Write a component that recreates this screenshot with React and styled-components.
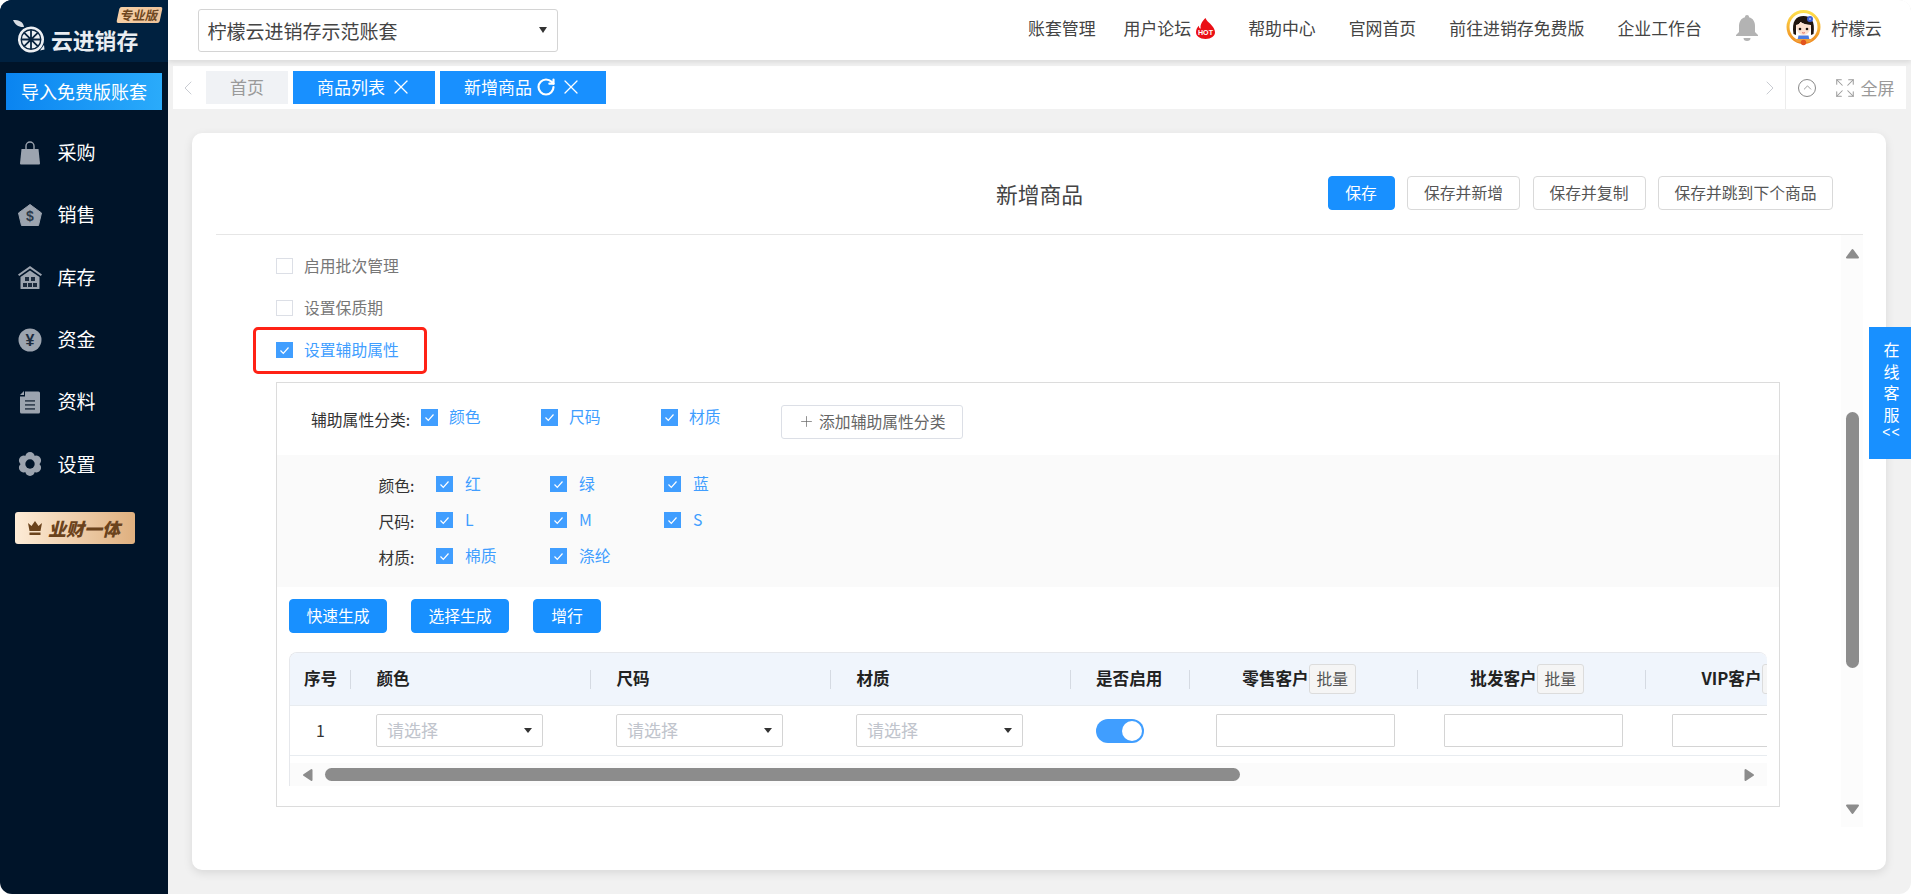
import React from "react";
import styled, { createGlobalStyle } from "styled-components";
import { X, RotateCw, ChevronLeft, ChevronRight, ChevronUp, Expand, Plus } from "lucide-react";

const Global = createGlobalStyle`
  html, body { margin: 0; padding: 0; background: #fff; }
  body { font-family: "Noto Sans CJK SC", "Liberation Sans", sans-serif; color: #333; }
  * { box-sizing: border-box; }
`;

const Page = styled.div`
  position: relative; width: 1911px; height: 894px; display: flex; overflow: hidden;
  border-radius: 12px; background: #f1f1f1;
`;
const Sidebar = styled.aside`
  width: 168px; flex: none; background: #001429; display: flex; flex-direction: column;
`;
const LogoBar = styled.div`
  position: relative; height: 62px; background: #002140; display: flex; align-items: flex-end;
  padding: 0 0 10px 13px; gap: 6px;
`;
const LogoText = styled.span`
  color: #e9edf2; font-size: 21.8px; font-weight: 700; line-height: 24px; white-space: nowrap;
`;
const Badge = styled.span`
  position: absolute; left: 118px; top: 7px; width: 43px; height: 16px; border-radius: 2px;
  background: linear-gradient(90deg, #f5cfa6, #eec39a); transform: skewX(-12deg);
  color: #6e4722; font-size: 12.5px; font-weight: 700; line-height: 16px; text-align: center; white-space: nowrap;
`;
const ImportButton = styled.div`
  margin: 11px 6px 0; height: 37px; background: linear-gradient(90deg, #0a84f0, #2aabfb); padding-bottom: 2px;
  color: #fff; font-size: 18px; display: flex; align-items: center; justify-content: center; white-space: nowrap;
`;
const Menu = styled.nav`
  margin-top: 11.5px; display: flex; flex-direction: column;
`;
const MenuItem = styled.div`
  height: 62.3px; display: flex; align-items: center; padding: 0 0 2px 18px; gap: 15.5px; color: #fff; font-size: 19px;
`;
const MenuIcon = styled.svg`
  width: 24px; height: 24px; flex: none; fill: #9ca4af; margin-top: 2px;
`;
const GoldButton = styled.div`
  margin: 16.5px 0 0 15px; width: 120px; height: 32px; border-radius: 3px;
  background: linear-gradient(90deg, #fdecd7, #dfb07f); display: flex; align-items: center;
  padding-left: 12px; gap: 5px; color: #6b431c; font-size: 18px; font-weight: 900; font-style: italic; white-space: nowrap;
`;
const Main = styled.div`
  flex: 1; min-width: 0; display: flex; flex-direction: column;
`;
const Header = styled.header`
  height: 60px; flex: none; background: #fff; box-shadow: 0 2px 5px rgba(0, 0, 0, 0.1);
  display: flex; align-items: center; justify-content: space-between; padding: 0 29px 2px 29.5px;
  position: relative; z-index: 1;
`;
const AccountSelect = styled.div`
  width: 360px; height: 43px; border: 1px solid #d4d4d4; border-radius: 3px; display: flex; align-items: center;
  justify-content: space-between; padding: 0 10px 0 9px; font-size: 19px; color: #444; margin-top: 2px;
`;
const Caret = styled.i`
  display: block; width: 0; height: 0; border-left: ${(p) => p.$w || 4.5}px solid transparent;
  border-right: ${(p) => p.$w || 4.5}px solid transparent; border-top: ${(p) => p.$h || 6}px solid #333;
`;
const Nav = styled.div`
  display: flex; align-items: center; gap: 33px; font-size: 16.9px; color: #444; white-space: nowrap; margin-top: -3px;
`;
const NavLink = styled.span`
  display: flex; align-items: center; gap: 3px; margin-left: ${(p) => (p.$pull ? "-5px" : "0")};
`;
const User = styled.span`
  display: flex; align-items: center; gap: 10.5px; margin-left: -6px;
`;
const TabBar = styled.div`
  margin: 6px 5px 0; height: 43px; display: flex; flex: none;
`;
const TabStrip = styled.div`
  flex: 1; background: #fff; display: flex; align-items: center; padding-left: 33px; position: relative; gap: 5px;
`;
const ArrowSlot = styled.span`
  position: absolute; top: 10px; left: ${(p) => p.$left ?? "auto"}; right: ${(p) => p.$right ?? "auto"};
  color: #c9ccd2; display: flex;
`;
const Tab = styled.div`
  height: 33px; display: flex; align-items: center; font-size: 17px; white-space: nowrap; padding-bottom: 2px;
  padding-left: ${(p) => (p.$active ? "24px" : "0")}; padding-right: ${(p) => (p.$active ? "22.5px" : "0")};
  background: ${(p) => (p.$active ? "#1890ff" : "#f0f2f5")}; color: ${(p) => (p.$active ? "#fff" : "#9a9a9a")};
  width: ${(p) => (p.$home ? "82px" : "auto")}; justify-content: ${(p) => (p.$home ? "center" : "flex-start")};
  gap: ${(p) => (p.$active ? "3.5px" : "0")};
`;
const FullBar = styled.div`
  width: 120px; margin-left: 1px; background: #fff; display: flex; align-items: center; padding-left: 12px;
  color: #9a9a9a; font-size: 17px; white-space: nowrap; box-shadow: -1px 0 0 #ececec;
`;
const CircleIcon = styled.span`
  width: 18px; height: 18px; border-radius: 50%; border: 1px solid #888; display: flex; align-items: center;
  justify-content: center; margin-right: 18px; color: #888;
`;
const Card = styled.section`
  margin: 24px 25px 24px 24px; flex: 1; min-height: 0; background: #fff; border-radius: 10px;
  box-shadow: 0 3px 10px rgba(0, 0, 0, 0.1); padding: 0 23px 0 24px; display: flex; flex-direction: column;
`;
const CardHead = styled.div`
  height: 102px; flex: none; border-bottom: 1px solid #e6e6e6; display: grid; grid-template-columns: 1fr auto 1fr;
  align-items: center; padding-top: 20px;
`;
const Title = styled.h1`
  margin: 0; font-size: 21.8px; font-weight: 400; color: #444; grid-column: 2;
`;
const HeadActions = styled.div`
  display: flex; justify-content: flex-end; gap: 12.5px; padding-right: 30px; margin-top: -1px;
`;
const Btn = styled.div`
  height: 34px; display: flex; align-items: center; justify-content: center; white-space: nowrap; font-size: 15.8px;
  border-radius: 4px; width: ${(p) => p.$w}px; padding-bottom: 2px;
  background: ${(p) => (p.$primary ? "#1890ff" : "#fff")}; color: ${(p) => (p.$primary ? "#fff" : "#555")};
  border: 1px solid ${(p) => (p.$primary ? "#1890ff" : "#d9d9d9")};
`;
const ScrollArea = styled.div`
  height: 592px; display: flex; flex: none;
`;
const Content = styled.div`
  flex: 1; min-width: 0; padding: 10px 61px 0 60px;
`;
const VTrack = styled.div`
  width: 22px; flex: none; background: #fcfcfc; display: flex; flex-direction: column; align-items: center;
`;
const VThumb = styled.div`
  width: 13px; height: 256px; margin-top: 153px; background: #8c8c8c; border-radius: 7px; flex: none;
`;
const ScrollArrow = styled.svg`
  display: block; flex: none; fill: #8c8c8c; stroke: #8c8c8c; stroke-width: 2; stroke-linejoin: round;
  margin: ${(p) => p.$margin};
`;
const OptionRow = styled.div`
  position: relative; height: 42px; display: flex; align-items: center; gap: 11.5px; font-size: 15.8px; padding-bottom: 2px;
  color: ${(p) => (p.$on ? "#409eff" : "#777")};
`;
const Highlight = styled.div`
  position: absolute; left: -23px; top: -2px; width: 174px; height: 47px; border: 3.5px solid #ff2216; border-radius: 5px;
`;
const Box = styled.span`
  width: 16.5px; height: 16.5px; flex: none; display: flex; align-items: center; justify-content: center; margin-top: 2px;
  background: ${(p) => (p.$on ? "#409eff" : "#fff")}; border: 1px solid ${(p) => (p.$on ? "#409eff" : "#dcdfe6")};
`;
const Panel = styled.div`
  margin-top: 11px; height: 425px; border: 1px solid #dcdcdc;
`;
const CategoryRow = styled.div`
  height: 72px; display: flex; align-items: center; padding: 0 0 0 34px; font-size: 15.8px; color: #333;
`;
const CategoryLabel = styled.span`
  width: 110px; white-space: nowrap; padding-top: 1px;
`;
const CategoryOption = styled.span`
  width: 120px; display: flex; align-items: center; gap: 11.5px; color: #409eff; font-size: 15.8px; margin-top: -3px; padding-bottom: 2px;
`;
const AddButton = styled.div`
  width: 181.5px; height: 34px; border: 1px solid #dcdfe6; border-radius: 3px; display: flex; align-items: center;
  justify-content: center; gap: 4px; color: #666; font-size: 15.8px; white-space: nowrap; margin-top: 5px; padding-bottom: 1px;
`;
const ValuesBlock = styled.div`
  background: #fafafa; height: 132px; padding: 11px 0 13px; display: flex; flex-direction: column;
`;
const ValueRow = styled.div`
  height: 36px; display: flex; align-items: center; font-size: 15.8px; color: #333;
`;
const ValueLabel = styled.span`
  width: 137.5px; padding-top: 3px; text-align: right; margin-right: 21.5px; flex: none;
`;
const ValueOption = styled.span`
  width: 114px; display: flex; align-items: center; gap: 12.5px; color: #409eff; padding-bottom: 2px;
`;
const ActionRow = styled.div`
  padding: 12px 0 0 12px; display: flex; gap: 24px;
`;
const TableWrap = styled.div`
  margin: 19px 12px 0; height: 134px; overflow: hidden; border-top: 1px solid #e6e8ec; border-left: 1px solid #e6e8ec;
  border-radius: 8px 8px 0 0; display: flex; flex-direction: column;
`;
const colTemplate = "61px 240px 240px 240px 119px 228px 228px 228px";
const HeadRow = styled.div`
  height: 53px; flex: none; display: grid; grid-template-columns: ${colTemplate}; background: #f0f5fc;
  border-bottom: 1px solid #e8ecf0; align-items: center; font-size: 16.6px; font-weight: 700; color: #222; white-space: nowrap;
`;
const HeadCell = styled.div`
  position: relative; height: 100%; display: flex; align-items: center;
  justify-content: ${(p) => (p.$center ? "center" : "flex-start")};
  padding-left: ${(p) => p.$pad ?? 0}px; padding-right: ${(p) => p.$padR ?? 0}px; padding-bottom: 2px;
  &::after {
    content: ""; position: absolute; right: 0; top: 17px; height: 19px; width: 1px;
    background: ${(p) => (p.$last ? "transparent" : "#d5dae2")};
  }
`;
const BatchButton = styled.span`
  width: 47px; height: 30px; flex: none; border: 1px solid #dcdcdc; border-radius: 3px; background: #f5f5f5; color: #555;
  font-weight: 400; font-size: 15.8px; display: flex; align-items: center; justify-content: center; margin-top: 2px; padding-bottom: 2px;
`;
const BodyRow = styled.div`
  height: 50px; flex: none; display: grid; grid-template-columns: ${colTemplate}; border-bottom: 1px solid #e8ecf0;
  align-items: center; white-space: nowrap; font-size: 15.8px;
`;
const BodyCell = styled.div`
  display: flex; align-items: center; justify-content: ${(p) => (p.$center ? "center" : "flex-start")};
  padding-left: ${(p) => p.$pad ?? 0}px;
`;
const SelectField = styled.div`
  width: 167px; height: 33px; border: 1px solid #d4d4d4; border-radius: 2px; display: flex; align-items: center;
  justify-content: space-between; padding: 0 10px 3px; font-size: 17px; color: #c0c4cc;
`;
const Toggle = styled.span`
  width: 48px; height: 24px; border-radius: 12px; background: #409eff; display: flex; align-items: center;
  justify-content: flex-end; padding-right: 2px;
  &::after { content: ""; width: 20px; height: 20px; border-radius: 50%; background: #fff; }
`;
const InputField = styled.div`
  width: 179px; height: 33px; border: 1px solid #d4d4d4; border-radius: 1px; background: #fff; flex: none;
`;
const HTrackGap = styled.div`
  height: 7px; flex: none;
`;
const HTrack = styled.div`
  height: 23px; flex: none; background: #fbfbfb; display: flex; align-items: center; padding-left: 12px;
`;
const HThumb = styled.div`
  width: 915px; height: 13px; background: #8c8c8c; border-radius: 7px; flex: none;
`;
const Service = styled.aside`
  position: absolute; right: 0; top: 327px; width: 42px; height: 132px; background: #1890ff; color: #fff;
  display: flex; flex-direction: column; align-items: center; padding: 12px 0 0 3px; font-size: 16px; line-height: 21.5px;
`;
const ServiceArrow = styled.span`
  font-size: 14px; line-height: 15px; letter-spacing: 1px; font-family: "Liberation Sans", sans-serif;
`;

const Check = ({ on }) => (
  <Box $on={on}>
    {on && (
      <svg width="11" height="9" viewBox="0 0 11 9" fill="none" stroke="#fff" strokeWidth="1.2">
        <path d="M1.5 4.5 4.3 7.3 9.5 1.5" />
      </svg>
    )}
  </Box>
);

const LogoMark = () => (
  <svg width="32" height="33" viewBox="0 0 32 33" style={{ flex: "none", marginBottom: "-1px" }}>
    <path d="M0 0c6 0 10 1.500 11 7C6 7.500 2 5 0 0z" fill="#d8dde3" />
    <path d="M18 6.500a13 13 0 1 1 0 26c-3 0-5-.500-7-2a13 13 0 0 1 7-24z" fill="#eceff3" />
    <path d="M31 25l.500 4.500-4.500 1z" fill="#eceff3" />
    <circle cx="18" cy="19.500" r="9.800" fill="none" stroke="#0a2540" strokeWidth="1.400" />
    <g stroke="#0a2540" strokeWidth="1.800">
      <path d="M18 10v19M8.500 19.500h19M11.300 12.800l13.400 13.400M24.700 12.800 11.300 26.200" />
    </g>
    <circle cx="18" cy="19.500" r="2.200" fill="#0a2540" />
  </svg>
);

const IconBag = () => (
  <MenuIcon viewBox="0 0 24 24">
    <path d="M3.500 8h17L22 22.500a1 1 0 0 1-1 1H3a1 1 0 0 1-1-1z" />
    <path d="M8 10V5a4 4 0 0 1 8 0v5" fill="none" stroke="#9ca4af" strokeWidth="1.400" />
  </MenuIcon>
);
const IconTag = () => (
  <MenuIcon viewBox="0 0 24 24">
    <path d="M12 1.500 23.500 10 20.500 22.500H3.500L.5 10z" stroke="#9ca4af" strokeLinejoin="round" />
    <text x="12" y="18" textAnchor="middle" fontSize="14" fontWeight="700" fill="#2c3a4b" fontFamily="Liberation Sans">$</text>
  </MenuIcon>
);
const IconHome = () => (
  <MenuIcon viewBox="0 0 24 24">
    <path d="M12 1 24 9.500 22.800 11 12 3.400 1.200 11 0 9.500z" />
    <path d="M12 5.500 21.500 12v11.500a.5.500 0 0 1-.5.5H3a.5.500 0 0 1-.5-.5V12z" />
    <path d="M7 12h4v4H7zM13 12h4v4h-4zM5 18h4v4H5zM10 18h4v4h-4zM15 18h4v4h-4z" fill="#1d2c3e" />
  </MenuIcon>
);
const IconYen = () => (
  <MenuIcon viewBox="0 0 24 24">
    <circle cx="12" cy="12" r="11.500" />
    <text x="12" y="18" textAnchor="middle" fontSize="16" fontWeight="700" fill="#1d2c3e" fontFamily="Liberation Sans">¥</text>
  </MenuIcon>
);
const IconDoc = () => (
  <MenuIcon viewBox="0 0 24 24">
    <path d="M7 1.500h13.500a1.500 1.500 0 0 1 1.500 1.500v19a1.500 1.500 0 0 1-1.500 1.500h-17A1.500 1.500 0 0 1 2 22V6.500h5z" />
    <path d="M2 5 6 1v4z" />
    <path d="M7 10h10v1.800H7zM7 14h10v1.800H7zM7 18h10v1.800H7z" fill="#3a4656" />
  </MenuIcon>
);
const IconGear = () => (
  <MenuIcon viewBox="0 0 24 24">
    {[0, 60, 120, 180, 240, 300].map((a) => (
      <circle key={a} cx="12" cy="4.800" r="4.800" transform={`rotate(${a} 12 12)`} />
    ))}
    <circle cx="12" cy="12" r="8" />
    <circle cx="12" cy="12" r="4.700" fill="#001429" />
  </MenuIcon>
);
const Crown = () => (
  <svg width="16" height="16" viewBox="0 0 16 16" fill="#6b431c" style={{ flex: "none" }}>
    <path d="M1 3l3.500 3L8 1l3.500 5L15 3l-1.500 8h-11z" />
    <path d="M2.500 12.500h11V15h-11z" />
  </svg>
);
const Fire = () => (
  <svg width="19" height="21" viewBox="0 0 20 22" style={{ marginTop: 1, marginLeft: 2 }}>
    <path d="M10 0c1 3 3 4 5 6 3 3 5 6 5 9 0 4-4 7-10 7S0 19 0 15c0-3 1-5 3-7 0 2 1 3 2 3C4 7 7 3 10 0z" fill="#ea0f16" />
    <text x="10" y="17.500" textAnchor="middle" fontSize="7.500" fontWeight="700" fill="#fff" fontFamily="Liberation Sans">HOT</text>
  </svg>
);
const Bell = () => (
  <svg width="24" height="26" viewBox="0 0 24 26" fill="#b3b3b3" style={{ flex: "none" }}>
    <path d="M12 0a2 2 0 0 1 2 2.200c4 1 6 4.500 6 8.800v6l3 3v1H1v-1l3-3v-6c0-4.300 2-7.800 6-8.800A2 2 0 0 1 12 0z" />
    <path d="M8.500 23h7a3.500 3 0 0 1-7 0z" />
  </svg>
);
const Avatar = () => (
  <svg width="35" height="36" viewBox="0 0 35 36" style={{ flex: "none" }}>
    <defs>
      <linearGradient id="ring" x1="0" y1="0" x2="0" y2="1">
        <stop offset="0" stopColor="#ffdf4d" />
        <stop offset="1" stopColor="#ef8a1f" />
      </linearGradient>
    </defs>
    <circle cx="17.500" cy="17" r="15.500" fill="#fff" stroke="url(#ring)" strokeWidth="3" />
    <path d="M7.500 24C5.500 11 10 6 17.500 6S29.500 11 27.500 24l-2.500 1V15c-4 0-8-1-10.500-3-1 2-2.500 3-4.500 3v10z" fill="#20150f" />
    <path d="M10 15c2 0 3.500-1 4.500-3 2.500 2 6.500 3 10.500 3 0 5-3 10-7.500 10S10 20 10 15z" fill="#fbe0cf" />
    <circle cx="14" cy="19" r="1.300" fill="#20150f" />
    <circle cx="21" cy="19" r="1.300" fill="#20150f" />
    <path d="M16 22.500c1 .7 2 .7 3 0" stroke="#d6453a" fill="none" strokeWidth=".8" />
    <circle cx="24" cy="9" r="3" fill="#3f62d6" />
    <circle cx="24" cy="9" r="1" fill="#a9bbf5" />
    <path d="M12.500 25.500h10l1 4.500h-12z" fill="#4a7be0" />
    <path d="M8 29h19l-3 3h-13z" fill="#f2a03a" />
    <circle cx="17.500" cy="32.500" r="2.700" fill="#e2541f" />
  </svg>
);

const menu = [
  ["采购", IconBag], ["销售", IconTag], ["库存", IconHome], ["资金", IconYen], ["资料", IconDoc], ["设置", IconGear],
];

const SelectBox = () => (
  <SelectField>
    请选择
    <Caret $w={4} $h={5.5} style={{ marginTop: 3 }} />
  </SelectField>
);

export default function App() {
  return (
    <>
      <Global />
      <Page>
        <Sidebar>
          <LogoBar>
            <LogoMark />
            <LogoText>云进销存</LogoText>
            <Badge>专业版</Badge>
          </LogoBar>
          <ImportButton>导入免费版账套</ImportButton>
          <Menu>
            {menu.map(([label, Icon]) => (
              <MenuItem key={label}>
                <Icon />
                {label}
              </MenuItem>
            ))}
          </Menu>
          <GoldButton>
            <Crown />
            业财一体
          </GoldButton>
        </Sidebar>
        <Main>
          <Header>
            <AccountSelect>
              柠檬云进销存示范账套
              <Caret />
            </AccountSelect>
            <Nav>
              <NavLink>账套管理</NavLink>
              <NavLink $pull>用户论坛<Fire /></NavLink>
              <NavLink>帮助中心</NavLink>
              <NavLink>官网首页</NavLink>
              <NavLink>前往进销存免费版</NavLink>
              <NavLink>企业工作台</NavLink>
              <Bell />
              <User><Avatar />柠檬云</User>
            </Nav>
          </Header>
          <TabBar>
            <TabStrip>
              <ArrowSlot $left="3px"><ChevronLeft size={24} strokeWidth={1} /></ArrowSlot>
              <Tab $home>首页</Tab>
              <Tab $active>商品列表<X size={24} strokeWidth={1.3} /></Tab>
              <Tab $active>新增商品<RotateCw size={20} strokeWidth={2.6} /><X size={24} strokeWidth={1.3} /></Tab>
              <ArrowSlot $right="3px"><ChevronRight size={24} strokeWidth={1} /></ArrowSlot>
            </TabStrip>
            <FullBar>
              <CircleIcon><ChevronUp size={13} strokeWidth={1.5} /></CircleIcon>
              <Expand size={22} strokeWidth={1.1} style={{ marginRight: 4.5 }} />
              全屏
            </FullBar>
          </TabBar>
          <Card>
            <CardHead>
              <Title>新增商品</Title>
              <HeadActions>
                <Btn $primary $w={67}>保存</Btn>
                <Btn $w={113}>保存并新增</Btn>
                <Btn $w={113}>保存并复制</Btn>
                <Btn $w={175}>保存并跳到下个商品</Btn>
              </HeadActions>
            </CardHead>
            <ScrollArea>
              <Content>
                <OptionRow><Check />启用批次管理</OptionRow>
                <OptionRow><Check />设置保质期</OptionRow>
                <OptionRow $on>
                  <Check on />设置辅助属性
                  <Highlight />
                </OptionRow>
                <Panel>
                  <CategoryRow>
                    <CategoryLabel>辅助属性分类:</CategoryLabel>
                    <CategoryOption><Check on />颜色</CategoryOption>
                    <CategoryOption><Check on />尺码</CategoryOption>
                    <CategoryOption><Check on />材质</CategoryOption>
                    <AddButton><Plus size={17} strokeWidth={1} />添加辅助属性分类</AddButton>
                  </CategoryRow>
                  <ValuesBlock>
                    <ValueRow>
                      <ValueLabel>颜色:</ValueLabel>
                      <ValueOption><Check on />红</ValueOption>
                      <ValueOption><Check on />绿</ValueOption>
                      <ValueOption><Check on />蓝</ValueOption>
                    </ValueRow>
                    <ValueRow>
                      <ValueLabel>尺码:</ValueLabel>
                      <ValueOption><Check on />L</ValueOption>
                      <ValueOption><Check on />M</ValueOption>
                      <ValueOption><Check on />S</ValueOption>
                    </ValueRow>
                    <ValueRow>
                      <ValueLabel>材质:</ValueLabel>
                      <ValueOption><Check on />棉质</ValueOption>
                      <ValueOption><Check on />涤纶</ValueOption>
                    </ValueRow>
                  </ValuesBlock>
                  <ActionRow>
                    <Btn $primary $w={98}>快速生成</Btn>
                    <Btn $primary $w={98}>选择生成</Btn>
                    <Btn $primary $w={68}>增行</Btn>
                  </ActionRow>
                  <TableWrap>
                    <HeadRow>
                      <HeadCell $center>序号</HeadCell>
                      <HeadCell $pad={25.5}>颜色</HeadCell>
                      <HeadCell $pad={25.5}>尺码</HeadCell>
                      <HeadCell $pad={25.5}>材质</HeadCell>
                      <HeadCell $pad={25}>是否启用</HeadCell>
                      <HeadCell $center $padR={10}>零售客户<BatchButton>批量</BatchButton></HeadCell>
                      <HeadCell $center $padR={10}>批发客户<BatchButton>批量</BatchButton></HeadCell>
                      <HeadCell $center $padR={10} $last>VIP客户<BatchButton /></HeadCell>
                    </HeadRow>
                    <BodyRow>
                      <BodyCell $center>1</BodyCell>
                      <BodyCell $pad={25}><SelectBox /></BodyCell>
                      <BodyCell $pad={25}><SelectBox /></BodyCell>
                      <BodyCell $pad={25}><SelectBox /></BodyCell>
                      <BodyCell $pad={25}><Toggle /></BodyCell>
                      <BodyCell $pad={26}><InputField /></BodyCell>
                      <BodyCell $pad={26}><InputField /></BodyCell>
                      <BodyCell $pad={26}><InputField /></BodyCell>
                    </BodyRow>
                    <HTrackGap />
                    <HTrack>
                      <ScrollArrow width="11" height="14" viewBox="0 0 11 14" $margin="0 12px 0 0"><path d="M9.500 2v10L2 7z" /></ScrollArrow>
                      <HThumb />
                      <ScrollArrow width="11" height="14" viewBox="0 0 11 14" $margin="0 0 0 504px"><path d="M1.500 2v10L9 7z" /></ScrollArrow>
                    </HTrack>
                  </TableWrap>
                </Panel>
              </Content>
              <VTrack>
                <ScrollArrow width="15" height="11" viewBox="0 0 15 11" $margin="13px 0 0"><path d="M2 9.500h11L7.500 2z" /></ScrollArrow>
                <VThumb />
                <ScrollArrow width="15" height="11" viewBox="0 0 15 11" $margin="auto 0 12px"><path d="M2 1.500h11L7.500 9z" /></ScrollArrow>
              </VTrack>
            </ScrollArea>
          </Card>
        </Main>
        <Service>
          <span>在</span><span>线</span><span>客</span><span>服</span>
          <ServiceArrow>&lt;&lt;</ServiceArrow>
        </Service>
      </Page>
    </>
  );
}
